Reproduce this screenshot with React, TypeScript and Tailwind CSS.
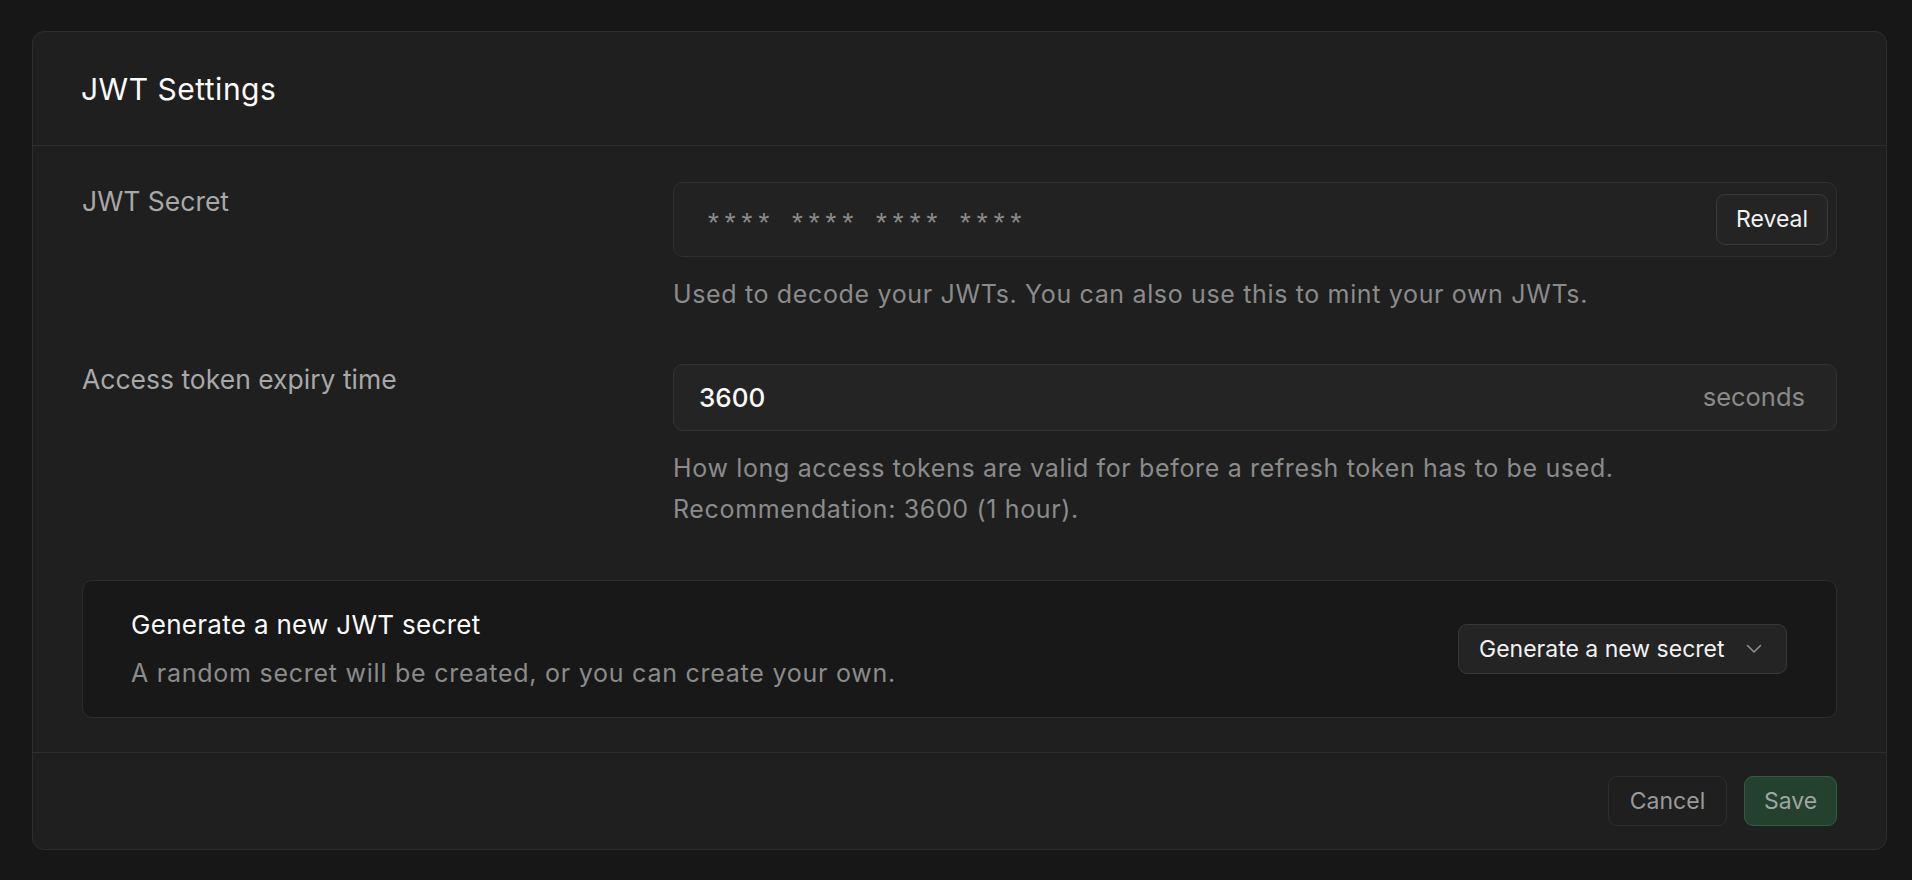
import React from "react";

const font = { fontFamily: "Inter, 'Noto Sans', sans-serif" };

function Chevron() {
  return (
    <svg width="16" height="10" viewBox="0 0 16 10" fill="none" className="shrink-0">
      <path d="M1.5 1.5 L8 8 L14.5 1.5" stroke="#8f8f8f" strokeWidth="1.6" strokeLinecap="round" strokeLinejoin="round" />
    </svg>
  );
}

export default function App() {
  return (
    <div className="w-[1912px] h-[880px] bg-[#171717] pt-[31px] pl-[32px]" style={font}>
      <div className="w-[1855px] rounded-[12px] border border-[#2e2e2e] bg-[#1f1f1f]">
        {/* header */}
        <div className="h-[114px] border-b border-[#2e2e2e] px-[48px] flex items-center">
          <h1 className="text-[30px] leading-[36px] text-[#fafafa] font-normal tracking-[0.5px]">JWT Settings</h1>
        </div>

        {/* body */}
        <div className="px-[49px] pt-[36px] pb-[34px] flex flex-col">
          {/* row 1 */}
          <div className="flex">
            <div className="w-[591px] shrink-0 pt-[1px] text-[26.5px] leading-[36px] text-[#a8a8a8]">JWT Secret</div>
            <div className="flex-1 flex flex-col">
              <div className="h-[75px] rounded-[10px] border border-[#303030] bg-[#222222] flex items-center pl-[31px] pr-[8px]">
                <span
                  className="flex-1 text-[28px] leading-[28px] pt-[12px] text-[#8a8a8a]"
                  style={{ fontFamily: "'Liberation Mono', monospace" }}
                >
                  **** **** **** ****
                </span>
                <button className="h-[51px] w-[112px] rounded-[9px] border border-[#3a3a3a] bg-[#242424] text-[23px] text-[#f2f2f2]">
                  Reveal
                </button>
              </div>
              <p className="mt-[17px] text-[25px] leading-[41px] tracking-[0.65px] text-[#8b8b8b]">
                Used to decode your JWTs. You can also use this to mint your own JWTs.
              </p>
            </div>
          </div>

          {/* row 2 */}
          <div className="flex mt-[49px]">
            <div className="w-[591px] shrink-0 -mt-[3px] text-[26.5px] leading-[36px] text-[#a8a8a8]">Access token expiry time</div>
            <div className="flex-1 flex flex-col">
              <div className="h-[67px] rounded-[10px] border border-[#333333] bg-[#242424] flex items-center pl-[25px] pr-[31px]">
                <span className="flex-1 text-[26px] font-medium text-[#fafafa]">3600</span>
                <span className="text-[25.5px] text-[#8a8a8a]">seconds</span>
              </div>
              <p className="mt-[17px] text-[25px] leading-[41px] tracking-[0.65px] text-[#8b8b8b]">
                How long access tokens are valid for before a refresh token has to be used.
                <br />
                Recommendation: 3600 (1 hour).
              </p>
            </div>
          </div>

          {/* generate box */}
          <div className="mt-[50px] h-[138px] rounded-[10px] border border-[#2e2e2e] bg-[#181818] flex items-center pl-[48px] pr-[49px]">
            <div className="flex-1 flex flex-col">
              <div className="text-[26px] leading-[32px] tracking-[0.3px] text-[#fafafa]">Generate a new JWT secret</div>
              <div className="mt-[16px] text-[25px] leading-[32px] tracking-[0.75px] text-[#8b8b8b]">
                A random secret will be created, or you can create your own.
              </div>
            </div>
            <button className="h-[50px] w-[329px] rounded-[9px] border border-[#383838] bg-[#242424] flex items-center pl-[20px] pr-[27px] gap-[22px]">
              <span className="text-[23px] text-[#f2f2f2] whitespace-nowrap">Generate a new secret</span>
              <Chevron />
            </button>
          </div>
        </div>

        {/* footer */}
        <div className="border-t border-[#2e2e2e] h-[97px] flex items-center justify-end gap-[17px] pr-[49px]">
          <button className="h-[50px] w-[119px] rounded-[9px] border border-[#2e2e2e] bg-[#1f1f1f] text-[23px] text-[#9a9a9a]">
            Cancel
          </button>
          <button className="h-[50px] w-[93px] rounded-[9px] border border-[#2f5e3f] bg-[#24412f] text-[23px] text-[#9fa6a1]">
            Save
          </button>
        </div>
      </div>
    </div>
  );
}
